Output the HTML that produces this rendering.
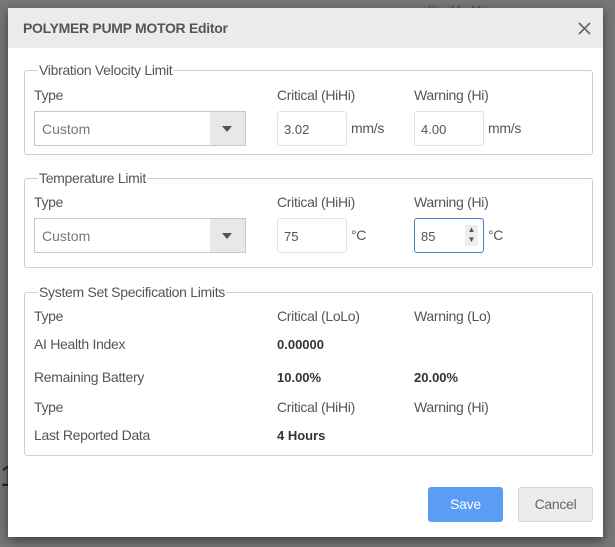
<!DOCTYPE html>
<html><head><style>
*{margin:0;padding:0;box-sizing:border-box}
body{width:615px;height:547px;background:#777;position:relative;overflow:hidden;font-family:"Liberation Sans",sans-serif;color:#444;font-size:14px}
.a{position:absolute;white-space:nowrap}
#dlg{position:absolute;left:8px;top:8px;width:595px;height:529px;background:#fff;box-shadow:0 3px 10px rgba(0,0,0,.5)}
#hd{position:absolute;left:0;top:0;width:595px;height:40px;background:#ebebeb}
.fs{position:absolute;left:16px;width:569px;border:1px solid #d0d0d0;border-radius:3px}
.lg{position:absolute;background:#fff;padding:0 1px;color:#555;font-size:14px;letter-spacing:-.3px}
.lbl{letter-spacing:-.3px;color:#555}
.sel{position:absolute;width:212px;height:35px;border:1px solid #c8c8c8;background:#fff}
.sel span{position:absolute;left:7px;top:9px;color:#777}
.sel i{position:absolute;right:0;top:0;width:35px;height:33px;background:#e8e8e8}
.sel i:after{content:"";position:absolute;left:12px;top:14px;border-left:5px solid transparent;border-right:5px solid transparent;border-top:6px solid #555}
.inp{position:absolute;width:70px;height:35px;border:1px solid #e3e3e3;border-radius:3px;font-size:13px;color:#555;padding:10px 6px}
b{color:#333;font-size:13px}
</style></head><body>
<div class="a" style="left:428px;top:3px;color:#555;font-size:12px">Pr · M · M</div>
<div class="a" style="left:0;top:460px;color:#222;font-size:30px">1</div>
<div id="dlg">
<div id="hd"><div class="a" style="left:15px;top:12px;font-weight:bold;font-size:14px;color:#555;letter-spacing:-.3px">POLYMER PUMP MOTOR Editor</div>
<svg class="a" style="left:570px;top:14px" width="13" height="13"><path d="M1 1L12 12M12 1L1 12" stroke="#666" stroke-width="1.6"/></svg></div>

<div class="fs" style="top:62px;height:85px"></div>
<div class="lg a" style="left:30px;top:54px">Vibration Velocity Limit</div>
<div class="a lbl" style="left:26px;top:79px">Type</div>
<div class="a lbl" style="left:269px;top:79px">Critical (HiHi)</div>
<div class="a lbl" style="left:406px;top:79px">Warning (Hi)</div>
<div class="sel" style="left:26px;top:103px"><span>Custom</span><i></i></div>
<div class="inp" style="left:269px;top:103px">3.02</div><div class="a lbl" style="left:343px;top:112px">mm/s</div>
<div class="inp" style="left:406px;top:103px">4.00</div><div class="a lbl" style="left:480px;top:112px">mm/s</div>

<div class="fs" style="top:170px;height:90px"></div>
<div class="lg a" style="left:30px;top:162px">Temperature Limit</div>
<div class="a lbl" style="left:26px;top:186px">Type</div>
<div class="a lbl" style="left:269px;top:186px">Critical (HiHi)</div>
<div class="a lbl" style="left:406px;top:186px">Warning (Hi)</div>
<div class="sel" style="left:26px;top:210px"><span>Custom</span><i></i></div>
<div class="inp" style="left:269px;top:210px">75</div><div class="a lbl" style="left:343px;top:219px">°C</div>
<div class="inp" style="left:406px;top:210px;border-color:#4a80c8">85<span style="position:absolute;left:50px;top:6px;width:13px;height:21px;background:#eee;font-size:8px;line-height:10px;text-align:center">▲<br>▼</span></div><div class="a lbl" style="left:480px;top:219px">°C</div>

<div class="fs" style="top:284px;height:164px"></div>
<div class="lg a" style="left:30px;top:276px">System Set Specification Limits</div>
<div class="a lbl" style="left:26px;top:300px">Type</div>
<div class="a lbl" style="left:269px;top:300px">Critical (LoLo)</div>
<div class="a lbl" style="left:406px;top:300px">Warning (Lo)</div>
<div class="a lbl" style="left:26px;top:328px">AI Health Index</div><b class="a" style="left:269px;top:329px">0.00000</b>
<div class="a lbl" style="left:26px;top:361px">Remaining Battery</div><b class="a" style="left:269px;top:362px">10.00%</b><b class="a" style="left:406px;top:362px">20.00%</b>
<div class="a lbl" style="left:26px;top:391px">Type</div>
<div class="a lbl" style="left:269px;top:391px">Critical (HiHi)</div>
<div class="a lbl" style="left:406px;top:391px">Warning (Hi)</div>
<div class="a lbl" style="left:26px;top:419px">Last Reported Data</div><b class="a" style="left:269px;top:420px">4 Hours</b>

<div class="a" style="left:420px;top:479px;width:75px;height:35px;background:#5b9cf7;border-radius:3px;color:#fff;text-align:center;line-height:35px;letter-spacing:-.3px">Save</div>
<div class="a" style="left:510px;top:479px;width:75px;height:35px;background:#ececec;border:1px solid #d5d5d5;border-radius:3px;color:#666;text-align:center;line-height:33px;letter-spacing:-.3px">Cancel</div>
</div>
</body></html>
